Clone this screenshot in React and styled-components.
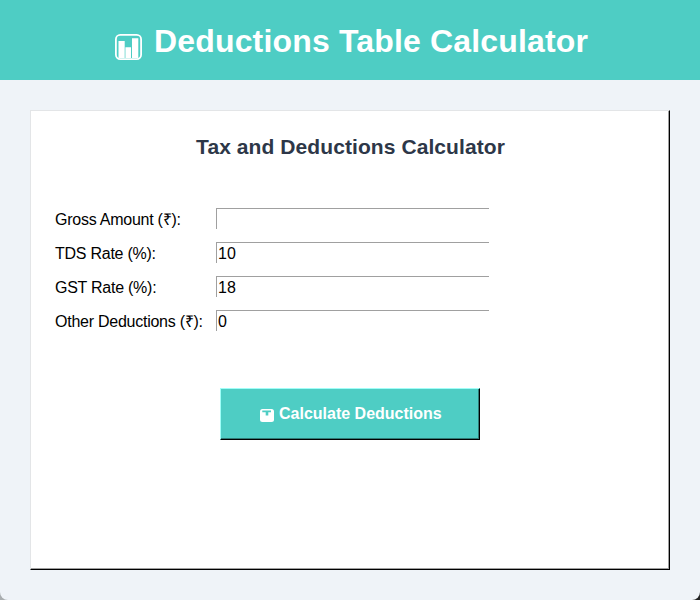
import React from 'react';
import styled, { createGlobalStyle } from 'styled-components';

const GlobalStyle = createGlobalStyle`
  *, *::before, *::after { box-sizing: border-box; }
  html, body { margin: 0; background: #a9adb0; }
  body { font-family: "Liberation Sans", Arial, sans-serif; }
`;

const Window = styled.main`
  width: 700px;
  height: 600px;
  display: flex;
  flex-direction: column;
  overflow: hidden;
  background: #eff3f8;
  border-radius: 0 0 8px 8px;
`;

const Backdrop = styled.div`
  width: 700px;
  height: 600px;
  background: linear-gradient(90deg, #a9adb0 50%, #222 50%);
`;

const Header = styled.header`
  height: 80px;
  flex: none;
  display: flex;
  padding: 0 0 0 115px;
  background: #4ecdc4;
  color: #fff;
`;

const HeaderIcon = styled.svg`
  width: 27px;
  height: 27px;
  margin: 33px 12px 0 0;
  flex: none;
`;

const Title = styled.h1`
  margin: 23px 0 0;
  font-size: 32px;
  line-height: 37px;
  letter-spacing: 0.16px;
  white-space: nowrap;
`;

const Panel = styled.section`
  width: 640px;
  height: 460px;
  margin: 30px 0 0 30px;
  padding: 0 0 0 24px;
  background: #fff;
  border: 1px solid;
  border-color: #e3e5e7 #000 #000 #e3e5e7;
  box-shadow: inset -1px -1px #9f9f9f;
`;

const Heading = styled.h2`
  margin: 24px 23px 0 0;
  height: 24px;
  font-size: 21px;
  line-height: 24px;
  letter-spacing: 0.08px;
  color: #2d3748;
  text-align: center;
  white-space: nowrap;
`;

const Form = styled.form`
  display: grid;
  grid-template-columns: 161px 273px;
  grid-auto-rows: 22px;
  row-gap: 12px;
  margin-top: 49px;
`;

const Label = styled.label`
  font-size: 16px;
  line-height: 24px;
  letter-spacing: -0.25px;
  color: #000;
  white-space: nowrap;
`;

const Input = styled.input`
  width: 273px;
  height: 21px;
  margin: 0;
  padding: 2px 0 0 1px;
  border: 0 solid #a0a0a0;
  border-width: 1px 0 0 1px;
  border-radius: 0;
  outline: 0;
  background: #fff;
  color: #000;
  font: 16px/18px "Liberation Sans", Arial, sans-serif;
`;

const Button = styled.button`
  width: 260px;
  height: 52px;
  display: flex;
  align-items: center;
  margin: 56px 0 0 165px;
  padding: 0 0 0 39px;
  border: 1px solid;
  border-color: #9ffff8 #000 #000 #9ffff8;
  border-radius: 0;
  box-shadow: inset -1px -1px #2f7b76;
  background: #4ecdc4;
  color: #fff;
  font: bold 16px/18px "Liberation Sans", Arial, sans-serif;
  white-space: nowrap;
`;

const ButtonIcon = styled.svg`
  width: 14px;
  height: 14px;
  margin: 2px 5px 0 0;
  flex: none;
`;

const fields = [
  { id: 'gross', label: 'Gross Amount (₹):', value: '' },
  { id: 'tds', label: 'TDS Rate (%):', value: '10' },
  { id: 'gst', label: 'GST Rate (%):', value: '18' },
  { id: 'other', label: 'Other Deductions (₹):', value: '0' },
];

export default function App() {
  return (
    <Backdrop>
      <GlobalStyle />
      <Window>
        <Header>
          <HeaderIcon viewBox="0 0 27 27" aria-hidden="true">
            <rect x="0.9" y="1.9" width="25.2" height="24.2" rx="4.3" fill="none" stroke="#fff" strokeWidth="1.8" />
            <path d="M3.5 8h6.2v17H3.5zM10.4 14.3h5.6v10.7h-5.6zM17 5.2h6.3V25H17z" fill="#fff" />
          </HeaderIcon>
          <Title>Deductions Table Calculator</Title>
        </Header>
        <Panel>
          <Heading>Tax and Deductions Calculator</Heading>
          <Form>
            {fields.map(({ id, label, value }) => (
              <React.Fragment key={id}>
                <Label htmlFor={id}>{label}</Label>
                <Input id={id} defaultValue={value} />
              </React.Fragment>
            ))}
          </Form>
          <Button type="button">
            <ButtonIcon viewBox="0 0 14 14" aria-hidden="true">
              <rect y="1" width="14" height="13" rx="2.5" fill="#fff" />
              <path d="M2.3 2.5H11v1.8H8.3v3.2H5.7V4.3H2.3z" fill="#4ecdc4" />
            </ButtonIcon>
            Calculate Deductions
          </Button>
        </Panel>
      </Window>
    </Backdrop>
  );
}
